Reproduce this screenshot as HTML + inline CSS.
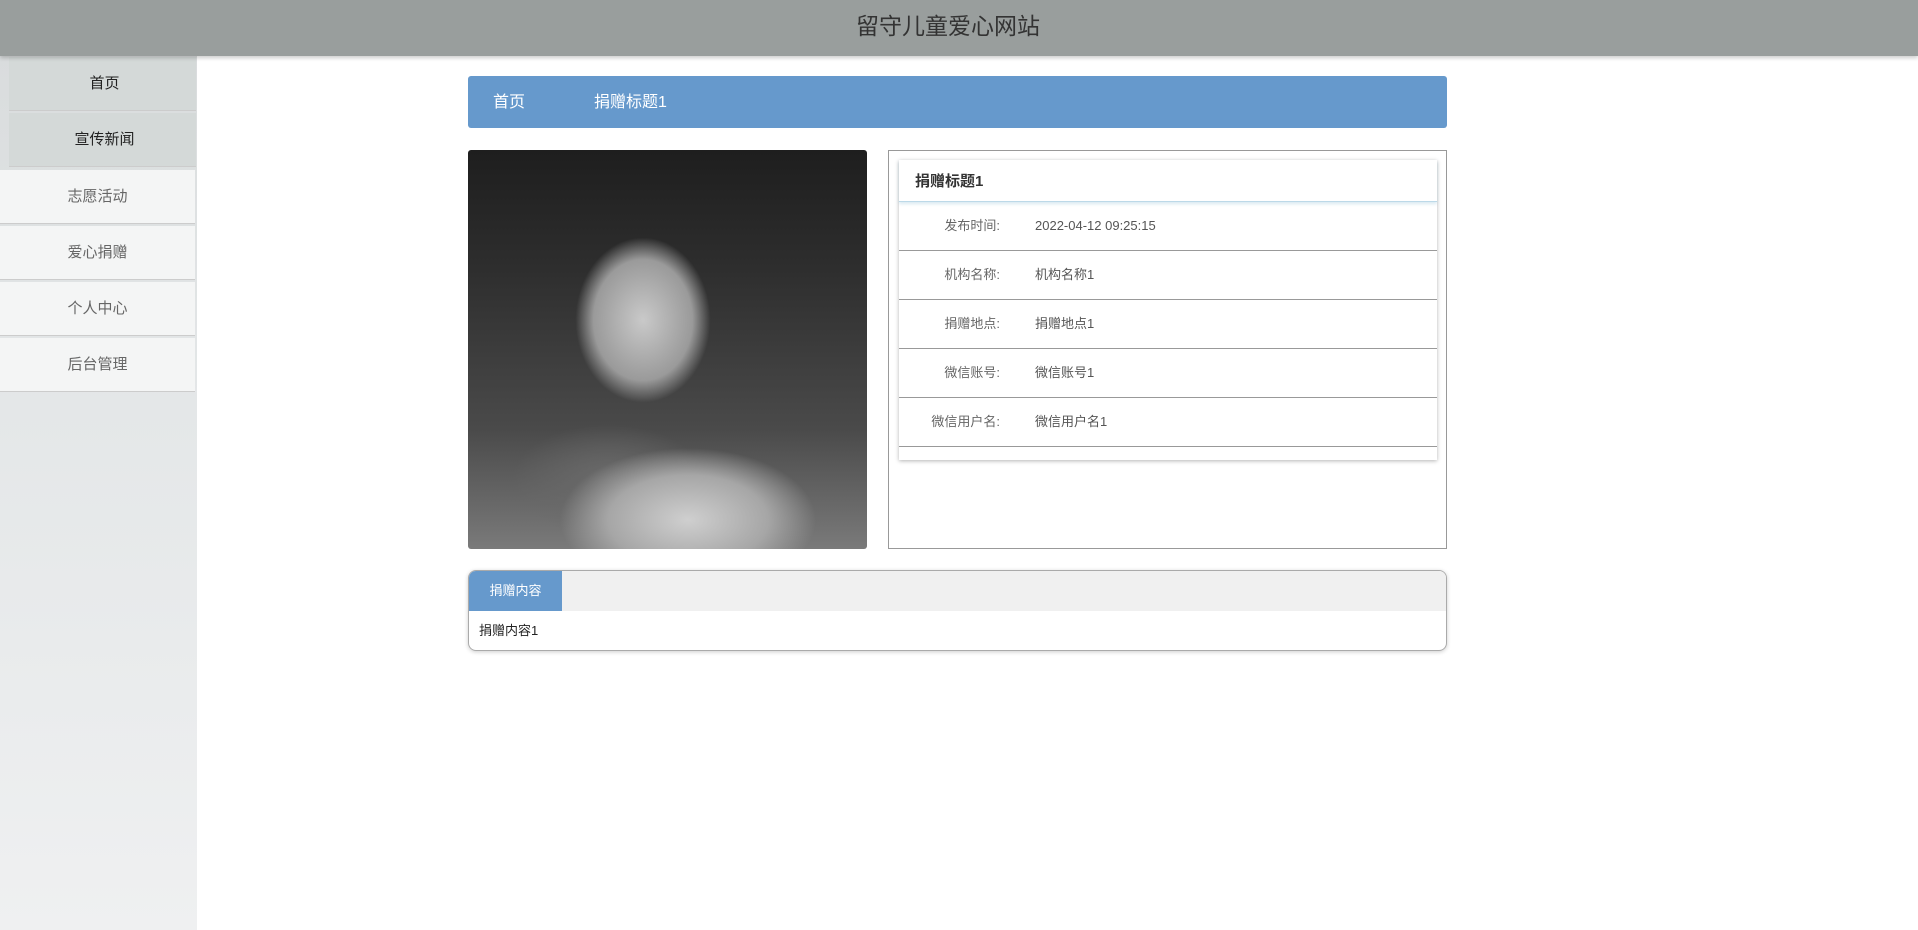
<!DOCTYPE html>
<html><head><meta charset="utf-8">
<style>
*{margin:0;padding:0;box-sizing:border-box}
body{width:1918px;height:930px;overflow:hidden;background:#fff;font-family:"Liberation Sans","Noto Sans CJK SC",sans-serif;position:relative}
.hd{position:absolute;left:0;top:0;width:1918px;height:56px;background:#999e9d;box-shadow:0 2px 4px rgba(0,0,0,.2);z-index:2;text-align:center;line-height:52px;font-size:23px;color:#333;padding-right:22px}
.sb{position:absolute;left:0;top:56px;width:197px;height:874px;background:linear-gradient(180deg,#d9dcdd 0%,#e4e7e8 40%,#eff0f1 100%)}
.it{position:absolute;left:0;width:195px;height:54px;background:#f4f5f5;color:#666;font-size:15px;text-align:center;line-height:54px;border-bottom:1px solid #ccc}
.it.a{left:9px;width:187px;background:#d4d9d8;color:#222;padding-left:4px}
.bc{position:absolute;left:468px;top:76px;width:979px;height:52px;background:#6699cc;border-radius:3px;color:#fff;font-size:16px;line-height:54px}
.img{position:absolute;left:468px;top:150px;width:399px;height:399px;border-radius:3px;overflow:hidden;
background:
radial-gradient(ellipse 90px 110px at 175px 170px,#c9c9c9 0%,#9a9a9a 55%,transparent 75%),
radial-gradient(ellipse 160px 90px at 220px 370px,#cfcfcf 0%,#a6a6a6 50%,transparent 80%),
radial-gradient(ellipse 120px 70px at 140px 330px,#6a6a6a 0%,transparent 80%),
linear-gradient(180deg,#1e1e1e 0%,#2e2e2e 30%,#4a4a4a 70%,#7a7a7a 100%)}
.box{position:absolute;left:888px;top:150px;width:559px;height:399px;border:1px solid #999}
.card{position:absolute;left:10px;top:9px;width:538px;height:300px;box-shadow:0 1px 4px rgba(0,0,0,.3)}
.tt{height:42px;line-height:44px;padding-left:16px;font-weight:bold;font-size:15px;color:#333;border-bottom:1px solid #bcd9e8;box-shadow:0 2px 3px rgba(160,200,220,.4)}
.row{height:49px;border-bottom:1px solid #999;font-size:13px;color:#666;line-height:48px;position:relative}
.row .l{position:absolute;right:437px;}
.row .v{position:absolute;left:136px;color:#555}
.ct{position:absolute;left:468px;top:570px;width:979px;height:81px;border:1px solid #aaa;border-radius:8px;overflow:hidden;box-shadow:0 1px 4px rgba(0,0,0,.2)}
.tb{height:40px;background:#f0f0f0}
.tb span{display:inline-block;width:93px;height:40px;background:#6699cc;color:#fff;font-size:13px;line-height:40px;text-align:center}
.cb{padding-left:10px;line-height:40px;font-size:13px;color:#222}
</style></head><body>
<div class="hd">留守儿童爱心网站</div>
<div class="sb"></div>
<div class="it a" style="top:57px">首页</div>
<div class="it a" style="top:113px">宣传新闻</div>
<div class="it" style="top:170px">志愿活动</div>
<div class="it" style="top:226px">爱心捐赠</div>
<div class="it" style="top:282px">个人中心</div>
<div class="it" style="top:338px">后台管理</div>
<div class="bc"><span style="position:absolute;left:25px">首页</span><span style="position:absolute;left:126px">捐赠标题1</span></div>
<div class="img"></div>
<div class="box"><div class="card">
<div class="tt">捐赠标题1</div>
<div class="row"><span class="l">发布时间:</span><span class="v">2022-04-12 09:25:15</span></div>
<div class="row"><span class="l">机构名称:</span><span class="v">机构名称1</span></div>
<div class="row"><span class="l">捐赠地点:</span><span class="v">捐赠地点1</span></div>
<div class="row"><span class="l">微信账号:</span><span class="v">微信账号1</span></div>
<div class="row"><span class="l">微信用户名:</span><span class="v">微信用户名1</span></div>
</div></div>
<div class="ct"><div class="tb"><span>捐赠内容</span></div><div class="cb">捐赠内容1</div></div>
</body></html>
